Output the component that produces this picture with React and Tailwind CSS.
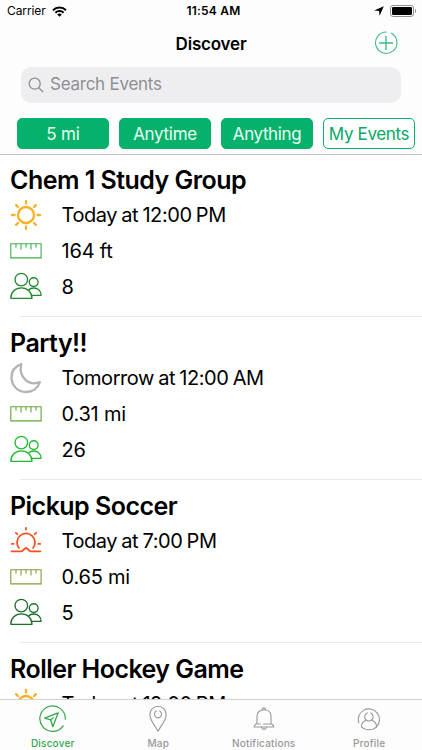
const filters = [
  { label: '5 mi', filled: true, tracking: 'tracking-[-0.2px]' },
  { label: 'Anytime', filled: true, tracking: 'tracking-[-0.3px]' },
  { label: 'Anything', filled: true, tracking: 'tracking-[-0.4px]' },
  { label: 'My Events', filled: false, tracking: 'tracking-[-0.35px]' },
]

const events = [
  { title: 'Chem 1 Study Group', time: 'Today at 12:00 PM', icon: SunIcon, distance: '164 ft', people: '8', ruler: 'text-[#3fae49]', group: 'text-[#1f8a2b]' },
  { title: 'Party!!', time: 'Tomorrow at 12:00 AM', icon: MoonIcon, distance: '0.31 mi', people: '26', ruler: 'text-[#63a537]', group: 'text-[#1fb82b]' },
  { title: 'Pickup Soccer', time: 'Today at 7:00 PM', icon: SunsetIcon, distance: '0.65 mi', people: '5', ruler: 'text-[#8a9a3c]', group: 'text-[#1d6f2b]' },
  { title: 'Roller Hockey Game', time: 'Today at 12:00 PM', icon: SunIcon },
]

const tabs = [
  { label: 'Discover', icon: CompassIcon, active: true },
  { label: 'Map', icon: PinIcon },
  { label: 'Notifications', icon: BellIcon },
  { label: 'Profile', icon: ProfileIcon },
]

function SunIcon() {
  return (
    <svg width="32" height="32" viewBox="0 0 32 32" fill="none" stroke="#fbb022" strokeWidth="2.3" strokeLinecap="round">
      <circle cx="16" cy="16" r="8" />
      <path d="M16 2v2.6M16 27.4V30M2 16h2.6M27.4 16H30M6.1 6.1 8 8M24 24l1.9 1.9M6.1 25.9 8 24M24 8l1.9-1.9" />
    </svg>
  )
}

function MoonIcon() {
  return (
    <svg width="32" height="32" viewBox="0 0 32 32" fill="none" stroke="#b3b3b3" strokeWidth="2.3" strokeLinejoin="round">
      <path d="M11.3 2.2C4.6 4.6 1.4 10 1.5 15.7 1.7 24 8.2 30 16 30c6.3 0 11.6-3.6 14-9.8-5.5 1.9-10.6 1.3-14.5-2.4-4.4-4.1-5.7-9.9-4.2-15.6Z" />
    </svg>
  )
}

function SunsetIcon() {
  return (
    <svg width="32" height="32" viewBox="0 0 32 32" fill="none" stroke="#f4531f" strokeWidth="1.8" strokeLinecap="round" strokeLinejoin="round">
      <path d="M8.9 23a9 9 0 1 1 14.2 0" />
      <path d="M1.5 26.3h10.3l4.2-3.6 4.2 3.6h10.3" />
      <path d="M16 2.8v1.8M5.9 7.8l1.4 1.4M26.1 7.8l-1.4 1.4M1.8 18.9h1.8M28.4 18.9h1.8" />
    </svg>
  )
}

function RulerIcon() {
  return (
    <svg width="32" height="32" viewBox="0 0 32 32" fill="none" stroke="currentColor" strokeWidth="1.1">
      <path d="M.8 8.7h30.3v14.2H.8zM6 9v3.5M11 9v5.5M16 9v3.5M21 9v5.5M26 9v3.5" />
    </svg>
  )
}

function PeopleIcon() {
  return (
    <svg width="32" height="32" viewBox="0 0 32 32" fill="none" stroke="currentColor" strokeWidth="1.35" strokeLinejoin="round">
      <circle cx="11.3" cy="9.6" r="6.3" />
      <path d="M.8 28.3C.8 21.9 5.3 17.9 11.4 17.9S21.8 21.9 22 28.3Z" />
      <circle cx="23.7" cy="12.1" r="4.4" />
      <path d="M18.5 19.9c1.4-1.3 3.2-1.9 5.2-1.9 4.2 0 7.2 2.9 7.4 7.4h-9.5" />
    </svg>
  )
}

function CompassIcon() {
  return (
    <svg width="28" height="28" viewBox="0 0 28 28" fill="none" stroke="currentColor" strokeWidth="1.2" strokeLinejoin="round" strokeLinecap="round">
      <path d="M26.3 14.2A12.7 12.7 0 1 0 24.1 20.8" />
      <path d="M19.2 7.8 5.7 13.2l6 1.8 2.1 6.7Z" strokeWidth="1.3" />
      <path d="m11.7 15 2.6-2.4" />
    </svg>
  )
}

function PinIcon() {
  return (
    <svg width="28" height="28" viewBox="0 0 28 28" fill="none" stroke="currentColor" strokeWidth="1.1" strokeLinecap="round" strokeLinejoin="round">
      <path d="M15.6 23.6 14 26.2C11.3 20.7 5.9 15.8 5.9 9.4a8.1 8.1 0 0 1 16.2 0c0 4.300-2.300 7.900-4.600 11.200L15.600 23.600" />
      <path d="M12.5 6a3.6 3.6 0 1 0 3.2.1" />
    </svg>
  )
}

function BellIcon() {
  return (
    <svg width="28" height="28" viewBox="0 0 28 28" fill="none" stroke="currentColor" strokeWidth="1.1" strokeLinecap="round" strokeLinejoin="round">
      <path d="M12.6 5a1.5 1.5 0 1 1 2.7 0" />
      <path d="M13.5 19H21v-8c0-3.8-3-6.2-7-6.2S7 7.3 7 11v6.500c-.4 1.500-2.800 2-2.900 4.500h19.800c-.1-1.700-1.200-2.300-2.100-3" />
      <path d="M7 19h3.5M11.5 22.2c.3 1.4 1.2 2.2 2.5 2.2s2.200-.8 2.500-2.200" />
    </svg>
  )
}

function ProfileIcon() {
  return (
    <svg width="28" height="28" viewBox="0 0 28 28" fill="none" stroke="currentColor" strokeWidth="1.1" strokeLinecap="round" strokeLinejoin="round">
      <path d="M3.8 17.8A10.6 10.6 0 1 1 21.6 21.8" />
      <path d="M12.3 7.9a4.2 4.2 0 1 0 3.5.1" />
      <path d="M11.3 15.2c-3 .9-4.8 3-4.9 6.6 1.9 1.9 4.5 2.9 7.6 2.900s5.700-1 7.600-2.900c-.1-3.600-1.900-5.700-4.900-6.600" />
    </svg>
  )
}

function StatusBar() {
  return (
    <div className="grid h-[22px] grid-cols-3 items-center pl-[7px] pr-[5px] text-[12px] leading-none">
      <div className="flex items-center gap-[6px]">
        <span className="tracking-[-0.1px]">Carrier</span>
        <svg width="15" height="11" viewBox="0 0 15 11" fill="none" stroke="#000" strokeWidth="2">
          <path d="M1 4.2a9.3 9.3 0 0 1 13 0M3.4 6.8a5.8 5.8 0 0 1 8.2 0" />
          <path d="M7.5 10.8 5.2 8.5a3.3 3.3 0 0 1 4.6 0Z" fill="#000" stroke="none" />
        </svg>
      </div>
      <div className="pl-[3px] text-center font-semibold tracking-[0.2px]">11:54 AM</div>
      <div className="flex items-center justify-end gap-[6px]">
        <svg width="10" height="10" viewBox="0 0 10 10">
          <path d="M9.8.2 5.6 9.8 5 5 .2 4.4Z" />
        </svg>
        <svg width="27" height="12" viewBox="0 0 27 12">
          <rect x=".5" y=".5" width="23" height="11" rx="2.6" fill="none" stroke="#8f8f8f" />
          <rect x="2" y="2" width="20" height="8" rx="1.3" />
          <path d="M25 4c1.5.5 1.5 3.5 0 4Z" fill="#8f8f8f" />
        </svg>
      </div>
    </div>
  )
}

function EventRow({ event }) {
  const TimeIcon = event.icon

  return (
    <li className="h-[163px] shrink-0 pt-2">
      <h2 className="h-[34px] pl-[10px] text-[25px] leading-[34px] font-semibold tracking-[-0.53px]">{event.title}</h2>
      <div className="flex h-[119px] flex-col gap-[3.6px] pt-[2px] pl-[10px] text-[20px] tracking-[-0.2px]">
        <div className="flex h-8 items-center gap-[19.5px]">
          <TimeIcon />
          <span className="tracking-[-0.43px] [word-spacing:-1px]">{event.time}</span>
        </div>
        {event.distance && (
          <div className="flex h-8 items-center gap-[19.5px]">
            <span className={event.ruler}><RulerIcon /></span>
            <span className="pt-px">{event.distance}</span>
          </div>
        )}
        {event.people && (
          <div className="flex h-8 items-center gap-[19.5px]">
            <span className={event.group}><PeopleIcon /></span>
            <span className="pt-px">{event.people}</span>
          </div>
        )}
      </div>
      <div className="ml-5 border-b border-[#e9e9eb]" />
    </li>
  )
}

export default function App() {
  return (
    <div className="flex h-[750px] w-[422px] flex-col overflow-hidden bg-white font-['Inter',sans-serif] text-black">
      {/* Header */}
      <header className="h-[155px] shrink-0 border-b border-[#c4c4c6] bg-[#fdfdfd]">
        <StatusBar />
        <div className="grid h-[45px] grid-cols-[1fr_auto_1fr] items-center pr-6">
          <span className="w-6" />
          <h1 className="pl-6 text-[17px] font-semibold tracking-[-0.2px]">Discover</h1>
          <svg className="mb-[3px] justify-self-end" width="24" height="24" viewBox="0 0 24 24" fill="none" stroke="#3dbb88" strokeWidth="1.1">
            <path d="M12.7 1A10.7 10.7 0 1 0 17 2.1" />
            <path d="M12 5v14M5 12h14" strokeWidth="1.4" />
          </svg>
        </div>
        <div className="mr-[21px] ml-[21px] flex h-9 items-center gap-[6px] rounded-[10px] bg-[#eeeef0] pl-[7px] text-[17px] tracking-[-0.25px] text-[#8e8e93]">
          <svg width="16" height="16" viewBox="0 0 16 16" fill="none" stroke="#8e8e93" strokeWidth="1.3" strokeLinecap="round">
            <circle cx="6.7" cy="6.7" r="5.5" />
            <path d="m10.8 10.8 4 4" />
          </svg>
          <span>Search Events</span>
        </div>
        <div className="mt-[15px] mr-[7px] ml-[17px] grid grid-cols-4 gap-[10px]">
          {filters.map((filter) => (
            <button
              key={filter.label}
              className={`h-[31px] rounded-[5px] border border-[#06b16b] pt-[2px] text-[17px] leading-none whitespace-nowrap ${filter.tracking} ${
                filter.filled ? 'bg-[#06b16b] text-[#e6fff4]' : 'bg-white text-[#06a865]'
              }`}
            >
              {filter.label}
            </button>
          ))}
        </div>
      </header>

      {/* Events */}
      <ul className="flex min-h-0 flex-1 flex-col overflow-hidden">
        {events.map((event) => (
          <EventRow key={event.title} event={event} />
        ))}
      </ul>

      {/* Tab bar */}
      <nav className="grid h-[51px] shrink-0 grid-cols-4 border-t border-[#d2d2d4] bg-[#fdfdfd]">
        {tabs.map((tab) => {
          const Icon = tab.icon

          return (
            <button key={tab.label} className={`flex flex-col items-center pt-[5px] ${tab.active ? 'text-[#2fa84a]' : 'text-[#98989a]'}`}>
              <Icon />
              <span className="mt-[4px] text-[10px] leading-[12px] font-medium tracking-[0.2px]">{tab.label}</span>
            </button>
          )
        })}
      </nav>
    </div>
  )
}
